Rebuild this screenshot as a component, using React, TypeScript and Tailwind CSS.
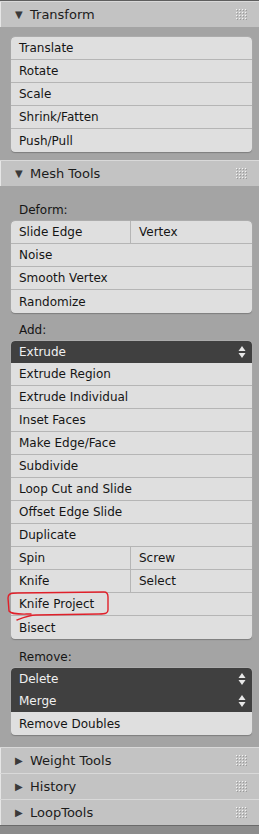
import React from "react";

const font = { fontFamily: '"DejaVu Sans", "Liberation Sans", sans-serif' };

function Grip() {
  const dots = [];
  for (let r = 0; r < 4; r++) {
    for (let c = 0; c < 4; c++) {
      dots.push(<rect key={`${r}-${c}`} x={c * 3 + 1} y={r * 3 + 1} width="1" height="1" fill="#f4f4f4" />);
      dots.push(<rect key={`s${r}-${c}`} x={c * 3 + 2} y={r * 3 + 2} width="1" height="1" fill="#9a9a9a" />);
    }
  }
  return (
    <svg width="13" height="13" className="ml-auto mr-[11px]">
      {dots}
    </svg>
  );
}

function PanelHeader({ title, open }: { title: string; open?: boolean }) {
  return (
    <div className="h-[26px] flex items-center bg-[#c3c3c3] border-t border-[#d9d9d9] shadow-[inset_1px_0_0_#e6e6e6]">
      <span className="w-[30px] pl-[15px] text-[10px] text-[#3a3a3a]">{open ? "▼" : "▶"}</span>
      <span className="text-[13px] text-[#1c1c1c]">{title}</span>
      <Grip />
    </div>
  );
}

function Arrows() {
  return (
    <svg width="8" height="14" viewBox="0 0 8 14" className="ml-auto mr-[6px]">
      <path d="M4 1 L7.5 6 L0.5 6 Z" fill="#e8e8e8" />
      <path d="M4 13 L7.5 8 L0.5 8 Z" fill="#e8e8e8" />
    </svg>
  );
}

type Row = string | [string, string];

function Row({ item, first, last }: { item: Row; first?: boolean; last?: boolean }) {
  return (
    <div
      className={
        "h-[23px] flex bg-[#dfdfdf] text-[12px] text-[#151515] " +
        (last ? "rounded-b-[4px] " : "border-b border-[#b5b5b5] ") +
        (first ? "rounded-t-[4px]" : "")
      }
    >
      {typeof item === "string" ? (
        <span className="pl-[8px] self-center">{item}</span>
      ) : (
        <>
          <span className="w-[119px] pl-[8px] self-center">{item[0]}</span>
          <span className="flex-1 pl-[8px] h-full flex items-center border-l border-[#b5b5b5]">{item[1]}</span>
        </>
      )}
    </div>
  );
}

function Dropdown({ label, first }: { label: string; first?: boolean }) {
  return (
    <div className={"h-[22px] flex items-center bg-[#404040] text-[12px] text-[#f0f0f0] " + (first ? "rounded-t-[4px]" : "")}>
      <span className="pl-[8px]">{label}</span>
      <Arrows />
    </div>
  );
}

function Box({ rows, dropdowns = [] }: { rows: Row[]; dropdowns?: string[] }) {
  return (
    <div className="rounded-[4px] shadow-[0_1px_1px_#7d7d7d,0_0_0_1px_#acacac] overflow-hidden">
      {dropdowns.map((d, i) => (
        <Dropdown key={d} label={d} first={i === 0} />
      ))}
      {rows.map((r, i) => (
        <Row key={i} item={r} first={i === 0 && dropdowns.length === 0} last={i === rows.length - 1} />
      ))}
    </div>
  );
}

function Label({ text }: { text: string }) {
  return <div className="h-[22px] flex items-center pl-[8px] text-[12px] text-[#151515]">{text}</div>;
}

export default function App() {
  return (
    <div style={font} className="w-[259px] h-[834px] bg-[#a4a4a4] flex flex-col overflow-hidden">
      <div className="h-[1px] bg-[#5e5e5e]" />
      <PanelHeader title="Transform" open />
      <div className="pt-[10px] pb-[8px] pl-[11px] pr-[7px]">
        <Box rows={["Translate", "Rotate", "Scale", "Shrink/Fatten", "Push/Pull"]} />
      </div>
      <PanelHeader title="Mesh Tools" open />
      <div className="pt-[13px] pb-[12px] pl-[11px] pr-[7px] flex flex-col relative">
        <Label text="Deform:" />
        <Box rows={[["Slide Edge", "Vertex"], "Noise", "Smooth Vertex", "Randomize"]} />
        <div className="h-[6px]" />
        <Label text="Add:" />
        <Box
          dropdowns={["Extrude"]}
          rows={[
            "Extrude Region",
            "Extrude Individual",
            "Inset Faces",
            "Make Edge/Face",
            "Subdivide",
            "Loop Cut and Slide",
            "Offset Edge Slide",
            "Duplicate",
            ["Spin", "Screw"],
            ["Knife", "Select"],
            "Knife Project",
            "Bisect",
          ]}
        />
        <div className="h-[7px]" />
        <Label text="Remove:" />
        <Box dropdowns={["Delete", "Merge"]} rows={["Remove Doubles"]} />
        <svg width="120" height="34" className="absolute left-0 top-[403px] pointer-events-none" viewBox="0 0 120 34">
          <path
            d="M31 25 C22 25 12 26 9 22 L8 9 C8 5 10 4 18 4 L104 3 C107 3 108 5 108 8 L108 21 C108 24 106 25 99 25 L36 26 C29 26 22 29 17 31"
            fill="none"
            stroke="#e0202a"
            strokeWidth="1.4"
            strokeLinecap="round"
          />
        </svg>
      </div>
      <PanelHeader title="Weight Tools" />
      <PanelHeader title="History" />
      <PanelHeader title="LoopTools" />
      <div className="h-[1px] bg-[#6a6a6a]" />
      <div className="flex-1 bg-[#8c8c8c]" />
    </div>
  );
}
